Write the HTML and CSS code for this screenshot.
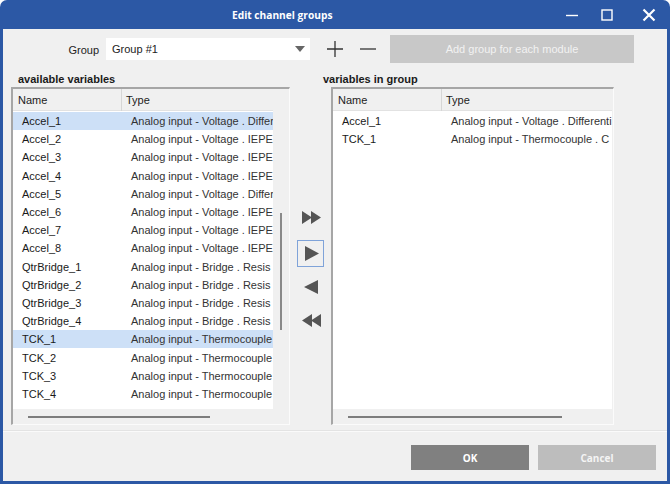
FILE: index.html
```html
<!DOCTYPE html>
<html>
<head>
<meta charset="utf-8">
<link rel="stylesheet" href="styles.css">
</head>
<body>
<div class="window">
  <div class="titlebar">
    <div class="title">Edit channel groups</div>
    <div class="controls">
      <svg class="ctl" width="14" height="14" viewBox="0 0 14 14"><line x1="1" y1="7.5" x2="13" y2="7.5" stroke="#fff" stroke-width="1.4"/></svg>
      <svg class="ctl" width="14" height="14" viewBox="0 0 14 14"><rect x="2" y="2" width="10" height="10" fill="none" stroke="#fff" stroke-width="1.4"/></svg>
      <svg class="ctl" width="14" height="14" viewBox="0 0 14 14"><path d="M1.5 1.5 L12.5 12.5 M12.5 1.5 L1.5 12.5" stroke="#fff" stroke-width="2.2"/></svg>
    </div>
  </div>
  <div class="body">
    <div class="toprow">
      <div class="group-label">Group</div>
      <div class="combo"><span>Group #1</span><svg width="10" height="6" viewBox="0 0 10 6"><path d="M0 0 H10 L5 6 Z" fill="#666"/></svg></div>
      <svg class="pm plus" width="16" height="16" viewBox="0 0 16 16"><path d="M8 0 V16 M0 8 H16" stroke="#333" stroke-width="1.3"/></svg>
      <svg class="pm minus" width="16" height="16" viewBox="0 0 16 16"><path d="M0 8 H16" stroke="#333" stroke-width="1.3"/></svg>
      <div class="addbtn">Add group for each module</div>
    </div>
    <div class="labels">
      <div class="lbl left-lbl">available variables</div>
      <div class="lbl right-lbl">variables in group</div>
    </div>
    <div class="panels">
      <div class="panel left">
        <div class="panel-main">
          <div class="table">
            <div class="thead"><div class="c1">Name</div><div class="c2">Type</div></div>
            <div class="tbody">
              <div class="row sel"><div class="c1">Accel_1</div><div class="c2">Analog input - Voltage . Differ</div></div>
              <div class="row"><div class="c1">Accel_2</div><div class="c2">Analog input - Voltage . IEPE</div></div>
              <div class="row"><div class="c1">Accel_3</div><div class="c2">Analog input - Voltage . IEPE</div></div>
              <div class="row"><div class="c1">Accel_4</div><div class="c2">Analog input - Voltage . IEPE</div></div>
              <div class="row"><div class="c1">Accel_5</div><div class="c2">Analog input - Voltage . Differ</div></div>
              <div class="row"><div class="c1">Accel_6</div><div class="c2">Analog input - Voltage . IEPE</div></div>
              <div class="row"><div class="c1">Accel_7</div><div class="c2">Analog input - Voltage . IEPE</div></div>
              <div class="row"><div class="c1">Accel_8</div><div class="c2">Analog input - Voltage . IEPE</div></div>
              <div class="row"><div class="c1">QtrBridge_1</div><div class="c2">Analog input - Bridge . Resis</div></div>
              <div class="row"><div class="c1">QtrBridge_2</div><div class="c2">Analog input - Bridge . Resis</div></div>
              <div class="row"><div class="c1">QtrBridge_3</div><div class="c2">Analog input - Bridge . Resis</div></div>
              <div class="row"><div class="c1">QtrBridge_4</div><div class="c2">Analog input - Bridge . Resis</div></div>
              <div class="row sel"><div class="c1">TCK_1</div><div class="c2">Analog input - Thermocouple</div></div>
              <div class="row"><div class="c1">TCK_2</div><div class="c2">Analog input - Thermocouple</div></div>
              <div class="row"><div class="c1">TCK_3</div><div class="c2">Analog input - Thermocouple</div></div>
              <div class="row"><div class="c1">TCK_4</div><div class="c2">Analog input - Thermocouple</div></div>
            </div>
          </div>
          <div class="vscroll"><div class="vthumb"></div></div>
        </div>
        <div class="hscroll"><div class="hthumb left-thumb"></div></div>
      </div>
      <div class="mover">
        <svg class="mv m-all-right" width="20" height="13" viewBox="0 0 20 13"><path d="M0 0 L10 6.5 L0 13 Z M9 0 L19 6.5 L9 13 Z" fill="#555"/></svg>
        <div class="mv-box"><svg width="14" height="15" viewBox="0 0 14 15"><path d="M0 0 L14 7.5 L0 15 Z" fill="#555"/></svg></div>
        <svg class="mv m-left" width="14" height="14" viewBox="0 0 14 14"><path d="M14 0 L0 7 L14 14 Z" fill="#555"/></svg>
        <svg class="mv m-all-left" width="20" height="13" viewBox="0 0 20 13"><path d="M20 0 L10 6.5 L20 13 Z M11 0 L1 6.5 L11 13 Z" fill="#555"/></svg>
      </div>
      <div class="panel right">
        <div class="panel-main">
          <div class="table wide">
            <div class="thead"><div class="c1">Name</div><div class="c2">Type</div></div>
            <div class="tbody">
              <div class="row"><div class="c1">Accel_1</div><div class="c2">Analog input - Voltage . Differenti</div></div>
              <div class="row"><div class="c1">TCK_1</div><div class="c2">Analog input - Thermocouple . C</div></div>
            </div>
          </div>
        </div>
        <div class="hscroll"><div class="hthumb right-thumb"></div></div>
      </div>
    </div>
    <div class="footer">
      <div class="btn ok">OK</div>
      <div class="btn cancel">Cancel</div>
    </div>
  </div>
</div>
</body>
</html>
```
FILE: styles.css
```css
html, body {
  margin: 0;
  padding: 0;
  background: #ffffff;
}
body {
  width: 670px;
  height: 484px;
  overflow: hidden;
  font-family: "Liberation Sans", Arial, sans-serif;
  font-size: 11px;
  color: #1a1a1a;
}
.window {
  width: 670px;
  height: 484px;
  box-sizing: border-box;
  background: #2c58a5;
  border-radius: 7px 7px 0 0;
  padding: 0 3px 3px 3px;
  display: flex;
  flex-direction: column;
}
.titlebar {
  height: 29px;
  flex: none;
  display: flex;
  align-items: center;
}
.title {
  margin-left: 229px;
  color: #fff;
  font-family: "Open Sans", "DejaVu Sans", sans-serif;
  font-weight: 700;
  font-size: 10.2px;
}
.controls {
  margin-left: auto;
  display: flex;
  align-items: center;
  margin-right: 11px;
}
.ctl { display: block; }
.ctl:nth-child(1) { margin-right: 21px; }
.ctl:nth-child(2) { margin-right: 28px; }
.body {
  flex: 1;
  background: #f0f0f0;
  display: flex;
  flex-direction: column;
}
.toprow {
  display: flex;
  align-items: center;
  height: 28px;
  margin-top: 6px;
}
.group-label {
  width: 96px;
  text-align: right;
  color: #222;
  padding-top: 1px;
}
.combo {
  margin-left: 7px;
  width: 204px;
  height: 22px;
  box-sizing: border-box;
  background: #fff;
  display: flex;
  align-items: center;
  justify-content: space-between;
  padding: 0 5px 0 6px;
  color: #222;
}
.combo svg { display: block; }
.pm { display: block; }
.plus { margin-left: 17px; }
.minus { margin-left: 17px; }
.addbtn {
  margin-left: 14px;
  width: 244px;
  height: 28px;
  background: #c8c8c8;
  color: #f2f2f2;
  display: flex;
  align-items: center;
  justify-content: center;
}
.labels {
  height: 24px;
  display: flex;
  align-items: flex-end;
}
.lbl {
  font-weight: 700;
  line-height: 16px;
  padding-bottom: 0;
}
.left-lbl { width: 313px; padding-left: 15px; box-sizing: border-box; }
.right-lbl { padding-left: 7px; }
.panels {
  display: flex;
  height: 338px;
  margin-left: 8px;
}
.panel {
  box-sizing: border-box;
  border-style: solid;
  border-width: 2px 1px 1px 2px;
  border-color: #a6a6a6 #fbfbfb #fbfbfb #a6a6a6;
  display: flex;
  flex-direction: column;
  background: #f0f0f0;
}
.panel.left { width: 279px; }
.panel.right { width: 283px; }
.panel-main {
  flex: 1;
  display: flex;
  min-height: 0;
}
.table {
  width: 260px;
  display: flex;
  flex-direction: column;
  overflow: hidden;
}
.table.wide { width: 279px; }
.thead {
  height: 22px;
  flex: none;
  display: flex;
  align-items: center;
  background: #f0f0f0;
  border-bottom: 1px solid #e2e2e2;
  box-sizing: border-box;
  color: #222;
}
.thead .c1 {
  width: 109px;
  box-sizing: border-box;
  padding-left: 5px;
  border-right: 1px solid #d6d6d6;
  height: 22px;
  line-height: 23px;
  flex: none;
}
.thead .c2 { padding-left: 4px; padding-top: 1px; }
.tbody {
  flex: 1;
  background: #fff;
  padding-top: 1px;
}
.row {
  height: 18.2px;
  display: flex;
  align-items: center;
  white-space: nowrap;
  overflow: hidden;
}
.row.sel { background: #cde0f7; }
.row .c1 {
  width: 110px;
  flex: none;
  box-sizing: border-box;
  padding-left: 9px;
}
.row .c2 {
  padding-left: 8px;
  color: #333;
}
.vscroll {
  width: 15px;
  flex: none;
}
.vthumb {
  width: 2px;
  height: 117px;
  background: #8a8a8a;
  margin: 124px 0 0 7px;
}
.hscroll {
  height: 15px;
  flex: none;
  display: flex;
  align-items: center;
}
.hthumb {
  height: 2px;
  background: #7d7d7d;
}
.left-thumb { width: 182px; margin-left: 15px; }
.right-thumb { width: 214px; margin-left: 15px; }
.mover {
  width: 41px;
  display: flex;
  flex-direction: column;
  align-items: center;
  padding-top: 124px;
  box-sizing: border-box;
}
.mv { display: block; }
.m-all-right { margin-left: 2px; }
.mv-box {
  margin-top: 16px;
  width: 27px;
  height: 27px;
  box-sizing: border-box;
  border: 1px solid #7fa3d9;
  display: flex;
  align-items: center;
  justify-content: center;
  padding-left: 2px;
}
.mv-box svg { display: block; }
.m-left { margin-top: 13px; }
.m-all-left { margin-top: 20px; }
.footer {
  margin-top: 5px;
  border-top: 1px solid #e3e3e3;
  box-shadow: inset 0 1px 0 #fafafa;
  flex: 1;
  display: flex;
  justify-content: flex-end;
  align-items: flex-start;
  padding: 14px 11px 0 0;
}
.btn {
  width: 118px;
  height: 25px;
  display: flex;
  align-items: center;
  justify-content: center;
  color: #fff;
  font-family: "Open Sans", "DejaVu Sans", sans-serif;
  font-weight: 700;
  font-size: 10px;
}
.ok { background: #808080; }
.cancel { background: #bdbdbd; margin-left: 9px; color: #f4f4f4; }
```
